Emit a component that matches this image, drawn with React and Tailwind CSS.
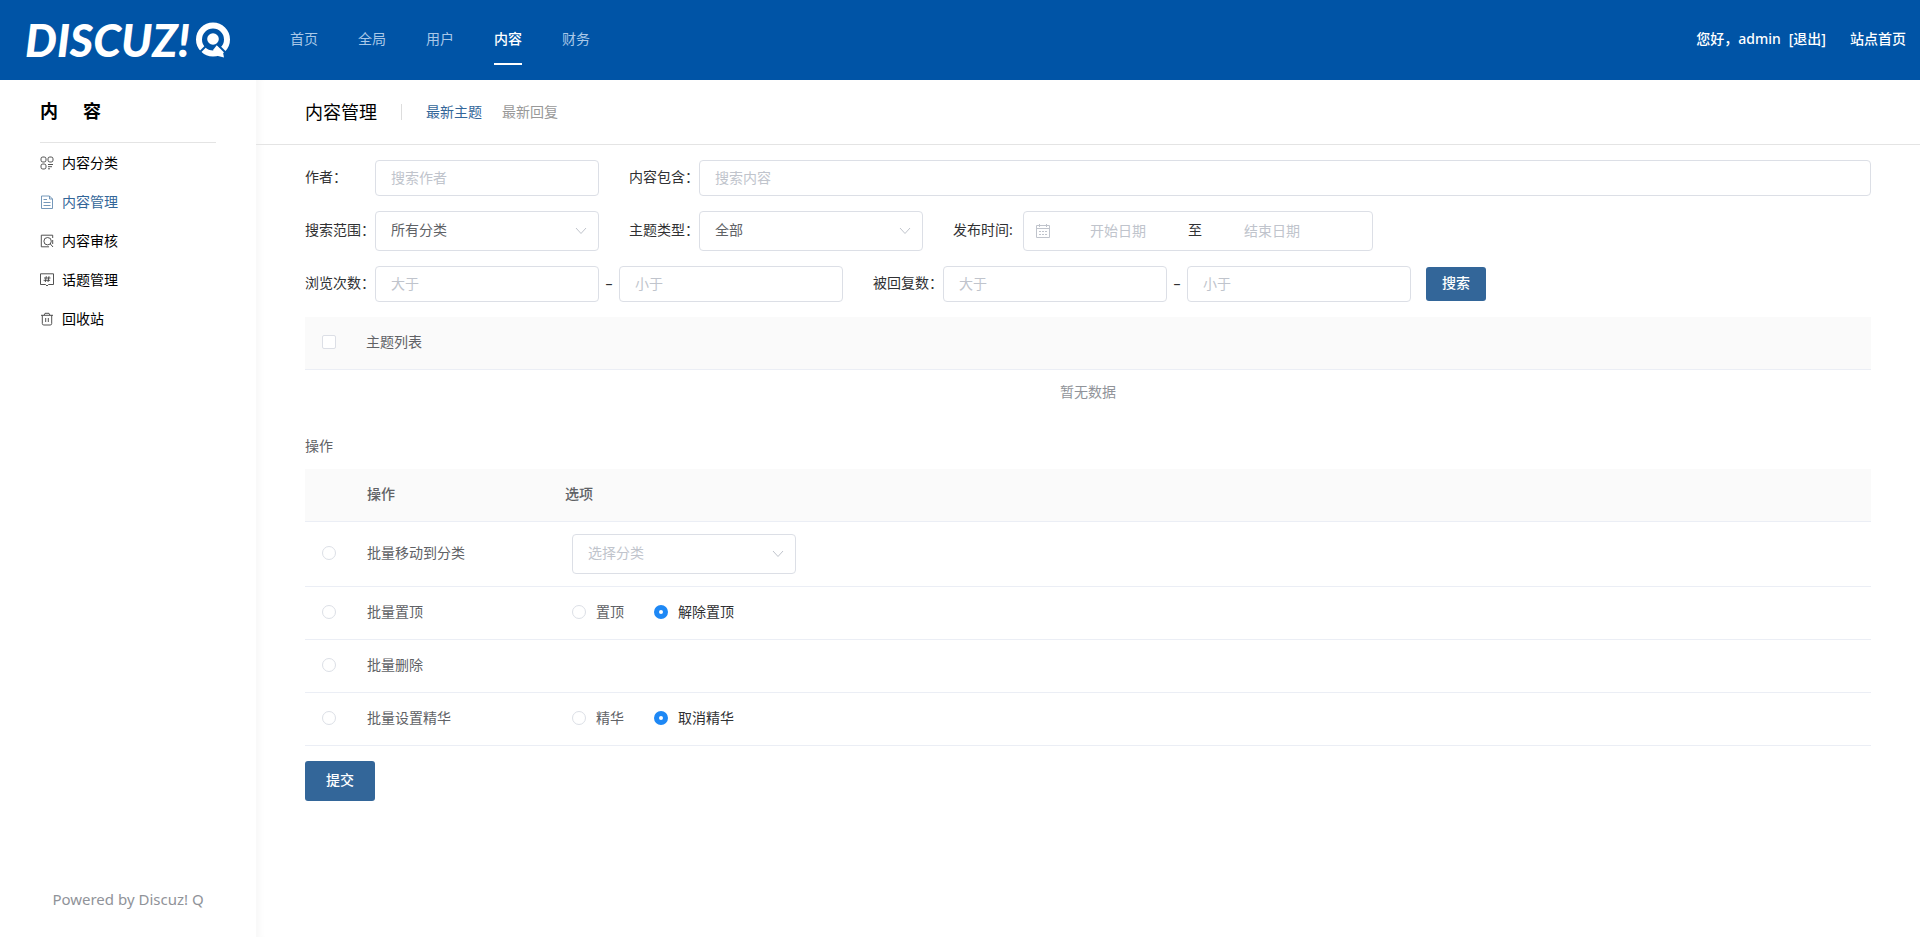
const navs = ["首页", "全局", "用户", "内容", "财务"]

const iconProps = {
  viewBox: "0 0 14 14",
  fill: "none",
  stroke: "currentColor",
  strokeWidth: 0.9,
  className: "h-3.5 w-3.5 shrink-0 opacity-75",
  "aria-hidden": true,
}

function CategoryIcon() {
  return (
    <svg {...iconProps}>
      <rect x="1" y="1" width="5" height="5" rx="1.8" />
      <rect x="8" y="1" width="5" height="5" rx="1.8" />
      <rect x="1" y="8" width="5" height="5" rx="1.8" />
      <path d="M8 8.5h5M8 10.7h4M8 12.8h2" />
    </svg>
  )
}

function DocIcon() {
  return (
    <svg {...iconProps}>
      <path d="M1.5 1h8l3 3v9.500h-11z" />
      <path d="M9.500 1v3h3M3.500 4.500h3.500M3.500 7.500h7M3.500 10.500h7" />
    </svg>
  )
}

function ReviewIcon() {
  return (
    <svg {...iconProps}>
      <path d="M12.700 4V1.200H1.300v11.600H9" />
      <circle cx="7.600" cy="7.200" r="3.700" />
      <path d="M10.200 9.800l2.800 3.200M12.700 6v4" />
    </svg>
  )
}

function TopicIcon() {
  return (
    <svg {...iconProps}>
      <path d="M.5 .8h13v10.700H8.500L7 13 5.500 11.500H.5z" />
      <path d="M6.300 3.200L5.300 9M9 3.200L8 9M4 5h6.500M3.600 7.300h6.500" />
    </svg>
  )
}

function TrashIcon() {
  return (
    <svg {...iconProps}>
      <path d="M1 3.300h12M4 3.300l1-2h4l1 2M2.300 3.300v8.200q0 1.500 1.500 1.500h6.400q1.500 0 1.500-1.500V3.300M5.700 6v4M8.300 6v4" />
    </svg>
  )
}

const menus = [
  { name: "内容分类", Icon: CategoryIcon },
  { name: "内容管理", Icon: DocIcon, active: true },
  { name: "内容审核", Icon: ReviewIcon },
  { name: "话题管理", Icon: TopicIcon },
  { name: "回收站", Icon: TrashIcon },
]

function Logo() {
  return (
    <a href="#" aria-label="DISCUZ! Q" className="flex w-[206px] items-center justify-between">
      <span className="font-['Lato',sans-serif] text-[45px] leading-none font-black italic">DISCUZ!</span>
      <svg viewBox="0 0 36 36" className="h-9 w-9 shrink-0" fill="none" aria-hidden>
        <circle cx="18" cy="17.5" r="14" stroke="#fff" strokeWidth="6" />
        <circle cx="18" cy="17" r="5.800" fill="#fff" />
        <path d="M12.500 22.500L4 31" stroke="#0054a6" strokeWidth="2" />
        <path d="M18 28l4-5 5.500 5 1.500 7.500-8-2z" fill="#fff" />
        <path d="M22.500 22.500l8.500 8.500" stroke="#0054a6" strokeWidth="2" />
      </svg>
    </a>
  )
}

function Arrow() {
  return (
    <svg viewBox="0 0 12 12" fill="none" stroke="#c0c4cc" className="pointer-events-none absolute top-[14px] right-3 h-3 w-3" aria-hidden>
      <path d="M1 3l5 5.500L11 3" />
    </svg>
  )
}

function TextInput({ id, label, placeholder, wide }) {
  return (
    <input
      id={id}
      type="text"
      aria-label={label}
      placeholder={placeholder}
      className={`h-9 rounded border border-[#dcdfe6] bg-white px-[15px] pb-0.5 text-sm text-[#606266] outline-none placeholder:text-[#c0c4cc] ${wide ? "min-w-0 flex-1" : "w-56"}`}
    />
  )
}

function Select({ id, label, text, muted }) {
  return (
    <div className="relative w-56">
      <select
        id={id}
        aria-label={label}
        className={`block h-10 w-full appearance-none rounded border border-[#dcdfe6] bg-white px-[15px] pb-0.5 text-sm outline-none ${muted ? "text-[#c0c4cc]" : "text-[#606266]"}`}
      >
        <option>{text}</option>
      </select>
      <Arrow />
    </div>
  )
}

function Label({ htmlFor, children }) {
  return (
    <label htmlFor={htmlFor} className="w-[70px] shrink-0 pb-0.5 text-sm">
      {children}
    </label>
  )
}

const radioCls =
  "block h-3.5 w-3.5 shrink-0 appearance-none rounded-full border border-[#dcdfe6] bg-white checked:border-[5px] checked:border-[#1e88f5]"

function OptionRadios({ name, options }) {
  return (
    <div className="flex items-center gap-[30px] pb-0.5 pl-[7px]">
      {options.map((text, i) => (
        <label key={text} className={`flex items-center gap-2.5 ${i === 1 ? "text-[#303133]" : ""}`}>
          <input type="radio" name={name} defaultChecked={i === 1} className={radioCls} />
          {text}
        </label>
      ))}
    </div>
  )
}

const rows = [
  { name: "批量移动到分类", height: "h-[65px]", option: <div className="pl-[7px]"><Select label="选择分类" text="选择分类" muted /></div> },
  { name: "批量置顶", height: "h-[53px]", option: <OptionRadios name="sticky" options={["置顶", "解除置顶"]} /> },
  { name: "批量删除", height: "h-[53px]" },
  { name: "批量设置精华", height: "h-[53px]", option: <OptionRadios name="essence" options={["精华", "取消精华"]} /> },
]

export default function App() {
  return (
    <div className="flex min-h-screen flex-col bg-white font-['Noto_Sans','Noto_Sans_CJK_SC',sans-serif] text-sm text-[#303133]">
      <header className="flex h-20 items-center bg-[#0054a6] pr-3.5 pl-[25px] text-white">
        <Logo />
        <nav className="ml-[59px] flex gap-10">
          {navs.map((n) => (
            <a
              key={n}
              href="#"
              className={`mt-3.5 border-b-2 pb-3.5 leading-5 ${n === "内容" ? "border-white font-medium" : "border-transparent text-[#a9c8e8]"}`}
            >
              {n}
            </a>
          ))}
        </nav>
        <div className="ml-auto flex pb-0.5 font-medium">
          <span>您好，admin</span>
          <a href="#" className="ml-2">[退出]</a>
          <a href="#" className="ml-6">站点首页</a>
        </div>
      </header>

      <div className="flex flex-1">
        <aside className="flex w-64 shrink-0 flex-col">
          <h2 className="mx-10 flex h-[63px] w-44 items-center gap-[25px] border-b border-[#e4e4e4] text-lg font-bold text-black">
            <span>内</span>
            <span>容</span>
          </h2>
          <ul className="flex flex-col gap-[19px] pt-2.5 pl-10">
            {menus.map(({ name, Icon, active }) => (
              <li key={name}>
                <a href="#" className={`flex items-center gap-2 leading-5 ${active ? "text-[#336699]" : "text-black"}`}>
                  <Icon />
                  {name}
                </a>
              </li>
            ))}
          </ul>
          <p className="mt-auto pb-7 text-center text-[15px] leading-5 text-[#909399]">Powered by Discuz! Q</p>
        </aside>

        <main className="min-w-0 flex-1 shadow-[inset_8px_0_6px_-4px_#f8f8f8]">
          <div className="flex h-[65px] items-center border-b border-[#e4e4e4] pl-[49px]">
            <h1 className="text-lg text-black">内容管理</h1>
            <span className="mx-6 h-4 w-px bg-[#dddddd]" />
            <a href="#" className="text-[#336699]">最新主题</a>
            <a href="#" className="ml-5 text-[#999999]">最新回复</a>
          </div>

          <div className="px-[49px]">
            <form className="flex flex-col gap-[15px] pt-[15px]">
              <div className="flex items-center">
                <Label htmlFor="author">作者：</Label>
                <TextInput id="author" placeholder="搜索作者" />
                <span className="w-[30px]" />
                <Label htmlFor="content">内容包含：</Label>
                <TextInput id="content" placeholder="搜索内容" wide />
              </div>
              <div className="flex items-center">
                <Label htmlFor="scope">搜索范围：</Label>
                <Select id="scope" text="所有分类" />
                <span className="w-[30px]" />
                <Label htmlFor="type">主题类型：</Label>
                <Select id="type" text="全部" />
                <span className="w-[30px]" />
                <Label htmlFor="start">发布时间:</Label>
                <div className="flex h-10 w-[350px] items-center rounded border border-[#dcdfe6] px-3">
                  <svg viewBox="0 0 14 14" fill="none" stroke="#c0c4cc" className="h-3.5 w-3.5 shrink-0" aria-hidden>
                    <path d="M.5 1.500h13v12H.5zM.5 4.500h13M3.500 0v3M10.500 0v3M3 7.500h2M6 7.500h2M9 7.500h2M3 10.500h2M6 10.500h2M9 10.500h2" />
                  </svg>
                  <input id="start" placeholder="开始日期" className="w-0 flex-1 text-center outline-none placeholder:text-[#c0c4cc]" />
                  <span className="w-[18px] pb-0.5 text-center">至</span>
                  <input aria-label="结束日期" placeholder="结束日期" className="w-0 flex-1 text-center outline-none placeholder:text-[#c0c4cc]" />
                  <span className="w-5" />
                </div>
              </div>
              <div className="flex items-center">
                <Label htmlFor="viewMin">浏览次数：</Label>
                <TextInput id="viewMin" placeholder="大于" />
                <span className="w-5 text-center">–</span>
                <TextInput label="浏览次数小于" placeholder="小于" />
                <span className="w-[30px]" />
                <Label htmlFor="replyMin">被回复数：</Label>
                <TextInput id="replyMin" placeholder="大于" />
                <span className="w-5 text-center">–</span>
                <TextInput label="被回复数小于" placeholder="小于" />
                <button type="button" className="ml-[15px] h-[34px] w-[60px] rounded-[3px] bg-[#336699] pb-0.5 font-medium text-white">搜索</button>
              </div>
            </form>

            <table className="mt-[15px] w-full text-left text-[#606266]">
              <thead>
                <tr className="h-[52px] border-b border-[#ebeef5] bg-[#fafafa]">
                  <th className="w-[61px] pb-0.5 pl-[17px]">
                    <input type="checkbox" aria-label="全选" className="block h-3.5 w-3.5 appearance-none rounded-xs border border-[#dcdfe6] bg-white" />
                  </th>
                  <th className="pb-0.5 font-normal">主题列表</th>
                </tr>
              </thead>
              <tbody>
                <tr className="h-[45px]">
                  <td colSpan={2} className="text-center text-[#909399]">暂无数据</td>
                </tr>
              </tbody>
            </table>

            <h3 className="mt-[22px] leading-5 text-[#606266]">操作</h3>

            <table className="mt-[13px] w-full text-left text-[#606266]">
              <thead>
                <tr className="h-[52px] border-b border-[#ebeef5] bg-[#fafafa]">
                  <th className="w-[62px]" />
                  <th className="w-[198px] pb-0.5 font-medium">操作</th>
                  <th className="pb-0.5 font-medium">选项</th>
                </tr>
              </thead>
              <tbody>
                {rows.map((r) => (
                  <tr key={r.name} className={`border-b border-[#ebeef5] ${r.height}`}>
                    <td className="pb-0.5 pl-[17px]">
                      <input type="radio" name="action" aria-label={r.name} className={radioCls} />
                    </td>
                    <td className="pb-0.5">{r.name}</td>
                    <td>{r.option}</td>
                  </tr>
                ))}
              </tbody>
            </table>

            <button type="button" className="mt-[15px] h-10 w-[70px] rounded-[3px] bg-[#336699] pb-0.5 font-medium text-white">提交</button>
          </div>
        </main>
      </div>
    </div>
  )
}
